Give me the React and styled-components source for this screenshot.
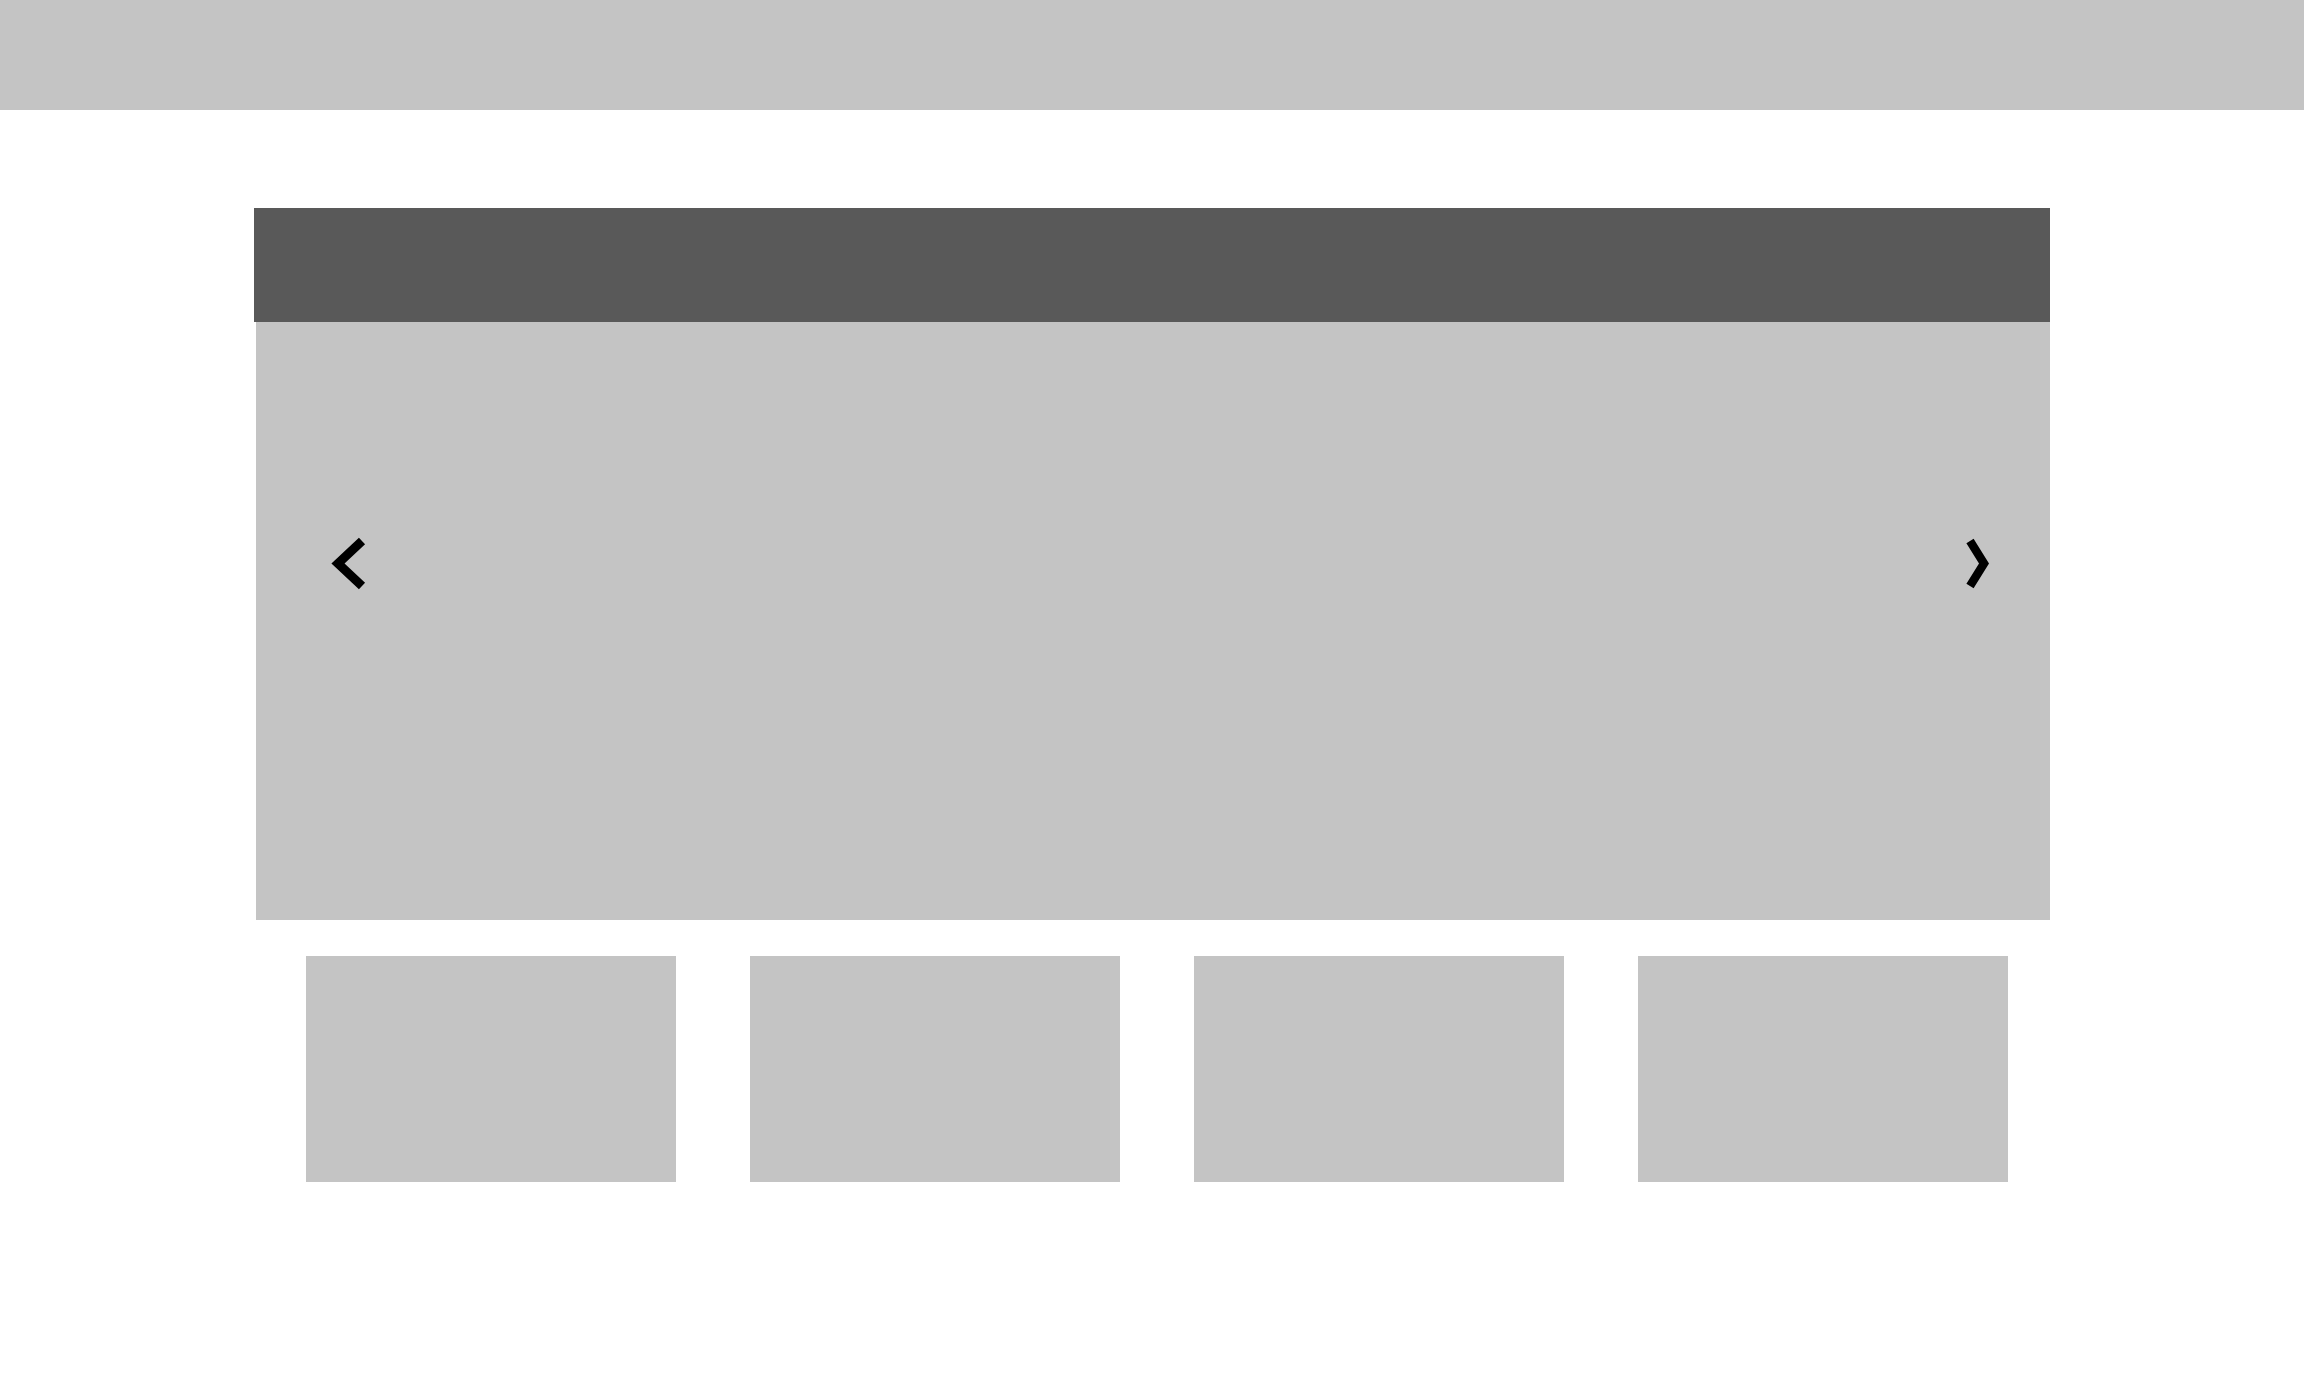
import React from "react";
import styled, { createGlobalStyle } from "styled-components";

const Global = createGlobalStyle`
  html, body { margin: 0; padding: 0; background: #ffffff; font-family: "Liberation Sans", Arial, sans-serif; }
`;

const Page = styled.div`
  width: 2304px;
  min-height: 1400px;
  background: #ffffff;
`;

const TopBar = styled.header`
  height: 110px;
  background: #c4c4c4;
`;

const Main = styled.main`
  padding: 98px 0 0 254px;
`;

const Carousel = styled.section`
  position: relative;
  width: 1796px;
  display: flex;
  flex-direction: column;
`;

const CarouselHeader = styled.div`
  height: 114px;
  background: #595959;
`;

const Slide = styled.div`
  height: 598px;
  margin-left: 2px;
  background: #c4c4c4;
`;

const Arrow = styled.button`
  position: absolute;
  top: 50%;
  transform: translateY(-50%);
  ${(p) => (p.$side === "left" ? "left: 74px;" : "right: 52px;")}
  width: ${(p) => p.$w}px;
  height: 56px;
  padding: 0;
  border: 0;
  background: transparent;
  display: flex;
  cursor: pointer;
`;

const ThumbRow = styled.div`
  display: flex;
  gap: 74px;
  margin-top: 36px;
  padding-left: 52px;
`;

const Thumb = styled.div`
  width: 370px;
  height: 226px;
  background: #c4c4c4;
`;

export default function App() {
  return (
    <Page>
      <Global />
      <TopBar />
      <Main>
        <Carousel>
          <CarouselHeader />
          <Slide />
          <Arrow $side="left" $w={40} aria-label="Previous">
            <svg width="40" height="56" viewBox="0 0 40 56">
              <polyline points="34,5 10,27.5 34,50" fill="none" stroke="#000" strokeWidth="9" strokeLinejoin="miter" />
            </svg>
          </Arrow>
          <Arrow $side="right" $w={36} aria-label="Next">
            <svg width="36" height="56" viewBox="0 0 36 56">
              <polyline points="8,5 22,27.5 8,50" fill="none" stroke="#000" strokeWidth="8.5" strokeLinejoin="miter" />
            </svg>
          </Arrow>
        </Carousel>
        <ThumbRow>
          <Thumb />
          <Thumb />
          <Thumb />
          <Thumb />
        </ThumbRow>
      </Main>
    </Page>
  );
}
